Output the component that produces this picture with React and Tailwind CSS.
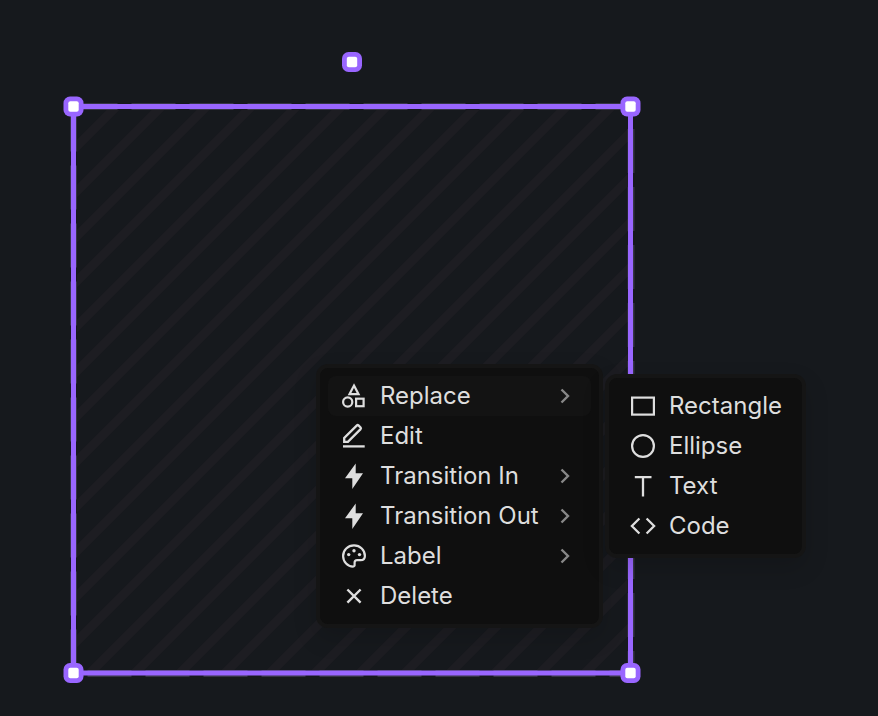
const STRIPES = Array.from({ length: 27 }, (_, i) => 223 + i * 45);

const HANDLES = [
  [352, 62],
  [73.5, 106.5],
  [630.5, 106.5],
  [73.5, 673],
  [630.5, 673],
];

function Canvas() {
  return (
    <svg className="absolute inset-0" width="878" height="716" viewBox="0 0 878 716">
      <defs>
        <clipPath id="frame">
          <rect x="77" y="110" width="551" height="560" />
        </clipPath>
      </defs>
      <g clipPath="url(#frame)" stroke="#1d1d22" strokeWidth="9.2">
        {STRIPES.map((c) => (
          <line key={c} x1={c} y1="0" x2={c - 716} y2="716" />
        ))}
      </g>
      <path
        d="M73.5 106.5H631V673.5H73.5Z"
        fill="none"
        stroke="#b9a6e6"
        strokeOpacity="0.2"
        strokeWidth="7"
        strokeDasharray="44 14"
      />
      <rect x="73.5" y="106.5" width="557" height="566.5" fill="none" stroke="#9966ff" strokeWidth="5" />
      {HANDLES.map(([x, y]) => (
        <g key={`${x}-${y}`}>
          <rect x={x - 10} y={y - 10} width="20" height="20" rx="6.5" fill="#9966ff" />
          <rect x={x - 5.2} y={y - 5.2} width="10.4" height="10.4" rx="2" fill="#fff" />
        </g>
      ))}
    </svg>
  );
}

const ICONS = {
  shapes: (
    <g strokeWidth="2.2">
      <path d="M14 3.6 18.5 12.2H9.5Z" />
      <circle cx="7.7" cy="20" r="4.6" />
      <rect x="16.1" y="16.7" width="7.5" height="7.5" />
    </g>
  ),
  edit: (
    <g strokeWidth="2.3">
      <path d="M3 24.4H24.7" />
      <path d="M4.2 19.8V16L16.9 3.4Q17.7 2.7 18.5 3.4L20.6 5.5Q21.3 6.3 20.6 7.1L7.9 19.8Z" />
    </g>
  ),
  bolt: <path d="M15.7 1.5 5 16.3H12.3V27L23 11.3H15.7Z" fill="currentColor" stroke="none" />,
  palette: (
    <g strokeWidth="2.2">
      <path d="M14 3.4C7.8 3.4 3.1 8.1 3.1 14 3.1 20 7.8 24.5 13 24.6 14.3 24.6 14.8 23.6 14.6 22.5V20.6C14.6 19.1 15.7 18.2 17.2 18.2H20.6C23.3 18.2 24.9 16.4 24.9 14 24.9 8.1 20.2 3.4 14 3.4Z" />
      <g fill="currentColor" stroke="none">
        <circle cx="8.7" cy="12.6" r="1.7" />
        <circle cx="14" cy="8.7" r="1.7" />
        <circle cx="19.5" cy="12.6" r="1.7" />
      </g>
    </g>
  ),
  close: <path d="M7.4 7.5 20.6 20.7M20.6 7.5 7.4 20.7" strokeWidth="2.4" />,
  rectangle: <rect x="3.1" y="5.6" width="21.8" height="17" strokeWidth="2.2" />,
  ellipse: <circle cx="14" cy="14" r="10.9" strokeWidth="2.2" />,
  text: <path d="M5.8 5.1H22.5M14 5.1V24.6" strokeWidth="2.3" />,
  code: <path d="M10.4 6.5 2.9 14 10.4 21.5M17.6 6.5 25.1 14 17.6 21.5" strokeWidth="2.3" />,
};

function Icon({ name }) {
  return (
    <svg className="shrink-0" width="28" height="28" viewBox="0 0 28 28" fill="none" stroke="currentColor">
      {ICONS[name]}
    </svg>
  );
}

function Item({ icon, label, submenu, active }) {
  return (
    <div className={`flex h-10 items-center rounded-lg pl-3 ${active ? "bg-[#131313]" : ""}`}>
      <Icon name={icon} />
      <span className="ml-3 flex-1 whitespace-nowrap">{label}</span>
      {submenu && (
        <svg className="mr-5 shrink-0 text-[#888888]" width="12" height="20" viewBox="0 0 12 20" fill="none" stroke="currentColor" strokeWidth="2.4">
          <path d="M2.5 3.5 9 10 2.5 16.5" />
        </svg>
      )}
    </div>
  );
}

export default function App() {
  return (
    <div className="relative h-[716px] w-[878px] overflow-hidden bg-[#16191d] font-['Inter',sans-serif] text-2xl text-[#dedede]">
      <Canvas />
      <div className="absolute left-[316px] top-[364px] w-[287px] rounded-xl border-4 border-[#151515] bg-[#0f0f0f] p-2 shadow-[0_10px_24px_rgba(0,0,0,0.14)]">
        <Item icon="shapes" label="Replace" submenu active />
        <Item icon="edit" label="Edit" />
        <Item icon="bolt" label="Transition In" submenu />
        <Item icon="bolt" label="Transition Out" submenu />
        <Item icon="palette" label="Label" submenu />
        <Item icon="close" label="Delete" />
      </div>
      <div className="absolute left-[605px] top-[374px] w-[201px] rounded-xl border-4 border-[#151515] bg-[#0f0f0f] p-2 shadow-[0_10px_24px_rgba(0,0,0,0.14)]">
        <Item icon="rectangle" label="Rectangle" />
        <Item icon="ellipse" label="Ellipse" />
        <Item icon="text" label="Text" />
        <Item icon="code" label="Code" />
      </div>
    </div>
  );
}
